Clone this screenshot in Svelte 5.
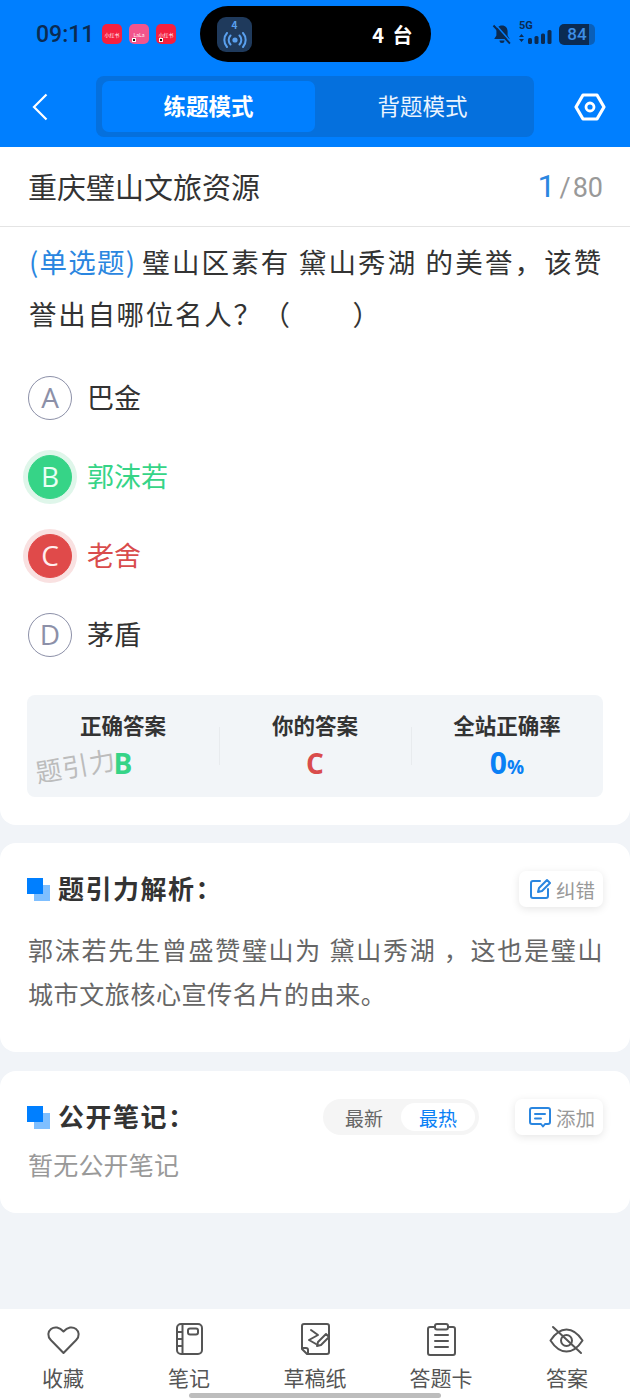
<script>
  const options = [
    { key: "A", text: "巴金", state: "" },
    { key: "B", text: "郭沫若", state: "right" },
    { key: "C", text: "老舍", state: "wrong" },
    { key: "D", text: "茅盾", state: "" }
  ];
  const apps = [
    { label: "小红书", cls: "red", dot: false },
    { label: "LaLa", cls: "pink", dot: true },
    { label: "小红书", cls: "red", dot: true }
  ];
  const tabs = ["收藏", "笔记", "草稿纸", "答题卡", "答案"];
</script>

<div class="page">
  <header class="top">
    <div class="status">
      <span class="time">09:11</span>
      <div class="apps">
        {#each apps as app}
          <span class="app {app.cls}">{app.label}{#if app.dot}<i></i>{/if}</span>
        {/each}
      </div>
      <div class="island">
        <span class="cast">
          <span class="cast-num">4</span>
          <svg width="28" height="16" viewBox="0 0 28 16" fill="none" stroke="#5aa0ee" stroke-width="2" stroke-linecap="round">
            <circle cx="14" cy="8" r="2.6" fill="#5aa0ee" stroke="none" />
            <path d="M9.5 3.5a6.5 6.5 0 0 0 0 9M18.5 3.5a6.5 6.5 0 0 1 0 9M6 1a10.5 10.5 0 0 0 0 14M22 1a10.5 10.5 0 0 1 0 14" />
          </svg>
        </span>
        <span class="island-text">4 台</span>
      </div>
      <div class="sys">
        <svg width="20" height="21" viewBox="0 0 20 21" fill="#0b2b52">
          <path d="M10 1.5c-3.6 0-5.6 2.6-5.6 6v4L2.2 15h15.4l-2-3.5v-4c0-3.4-2-6-5.6-6zM7.5 16.5a2.5 2.5 0 0 0 5 0z" />
          <path d="M1.5 1.5l16.5 18" stroke="#0b2b52" stroke-width="2" />
          <path d="M3.5 0.5l16 18" stroke="#007fff" stroke-width="1.5" />
        </svg>
        <span class="signal">
          <span class="five-g">5G</span>
          <svg width="33" height="15" viewBox="0 0 33 15" fill="#0b2b52">
            <path d="M2.5 1l2.5 3H0zM2.5 9L0 6h5z" transform="translate(0 3)" />
            <rect x="9" y="8" width="4" height="6" rx="1.5" />
            <rect x="15.5" y="6" width="4" height="8" rx="1.5" />
            <rect x="22" y="3.5" width="4" height="10.5" rx="1.5" />
            <rect x="28.5" y="0" width="4" height="14" rx="1.5" />
          </svg>
        </span>
        <span class="battery">84</span>
      </div>
    </div>
    <nav class="bar">
      <svg class="back" width="16" height="28" viewBox="0 0 16 28" fill="none" stroke="#fff" stroke-width="2.2">
        <path d="M14.5 1.5L2 14l12.5 12.5" />
      </svg>
      <div class="modes">
        <span class="mode active">练题模式</span>
        <span class="mode">背题模式</span>
      </div>
      <svg class="gear" width="32" height="28" viewBox="0 0 32 28" fill="none" stroke="#fff" stroke-width="3.2" stroke-linejoin="round">
        <path d="M9 2h14l7 12-7 12H9L2 14z" />
        <circle cx="16" cy="14" r="4" stroke-width="2.8" />
      </svg>
    </nav>
  </header>

  <section class="card main">
    <div class="title-row">
      <h1>重庆璧山文旅资源</h1>
      <div class="count"><b>1</b><span>/</span><span>80</span></div>
    </div>
    <p class="question"><span class="kind">(单选题)</span>璧山区素有 黛山秀湖 的美誉，该赞誉出自哪位名人？（　&nbsp;&nbsp;&nbsp;&nbsp;）</p>
    <div class="options">
      {#each options as o}
        <div class="option {o.state}">
          <span class="letter">{o.key}</span>
          <span class="label">{o.text}</span>
        </div>
      {/each}
    </div>
    <div class="result">
      <div class="cell">
        <span class="cell-title">正确答案</span>
        <span class="cell-value green">B</span>
      </div>
      <div class="cell">
        <span class="cell-title">你的答案</span>
        <span class="cell-value red-text">C</span>
      </div>
      <div class="cell">
        <span class="cell-title">全站正确率</span>
        <span class="cell-value blue">0<small>%</small></span>
      </div>
      <span class="watermark">题引力</span>
    </div>
  </section>

  <section class="card analysis">
    <div class="head">
      <span class="mark"></span>
      <h2>题引力解析：</h2>
      <button class="pill-btn">
        <svg width="22" height="22" viewBox="0 0 22 22" fill="none" stroke="#2a86e0" stroke-width="2" stroke-linecap="round" stroke-linejoin="round">
          <path d="M11 3H4a2 2 0 0 0-2 2v13a2 2 0 0 0 2 2h13a2 2 0 0 0 2-2v-7" />
          <path d="M9 14l1-4L18 2l3 3-8 8z" />
        </svg>
        纠错
      </button>
    </div>
    <p class="analysis-text">郭沫若先生曾盛赞璧山为 黛山秀湖 ，这也是璧山城市文旅核心宣传名片的由来。</p>
  </section>

  <section class="card notes">
    <div class="head">
      <span class="mark"></span>
      <h2>公开笔记：</h2>
      <div class="sort">
        <span>最新</span>
        <span class="on">最热</span>
      </div>
      <button class="pill-btn wide">
        <svg width="22" height="22" viewBox="0 0 22 22" fill="none" stroke="#2a86e0" stroke-width="2" stroke-linecap="round" stroke-linejoin="round">
          <path d="M3 2h16a2 2 0 0 1 2 2v12a2 2 0 0 1-2 2h-3l-2 2.5-2-2.5H3a2 2 0 0 1-2-2V4a2 2 0 0 1 2-2z" />
          <path d="M6 8h10M6 12.5h6" />
        </svg>
        添加
      </button>
    </div>
    <p class="empty">暂无公开笔记</p>
  </section>

  <div class="spacer"></div>

  <footer class="tabs">
    {#each tabs as t, i}
      <div class="tab">
        <svg width="36" height="36" viewBox="0 0 36 36" fill="none" stroke="#555" stroke-width="2" stroke-linecap="round" stroke-linejoin="round">
          {#if i === 0}
            <path d="M18.5 29L5.8 16C2.2 12.3 2.8 7.5 6 5c3.5-2.7 8.5-2 12.5 2.5C22.5 3 27.5 2.3 31 5c3.2 2.5 3.8 7.3.2 11z" />
          {:else if i === 1}
            <rect x="6" y="0" width="25" height="30" rx="4" />
            <path d="M11.5 0v30M6 8h5.5M6 15h5.5M6 22h5.5" />
            <rect x="17" y="4.5" width="10" height="6" rx="2" />
          {:else if i === 2}
            <path d="M30 0H7a2 2 0 0 0-2 2v23l5 5h20a2 2 0 0 0 2-2V2a2 2 0 0 0-2-2z" />
            <path d="M5 24h4a2 2 0 0 1 2 2v4" />
            <path d="M14 6l7 5-9 5 7 4" />
            <path d="M20 22l1-4 8-8 3 3-8 8z" fill="#fff" />
          {:else if i === 3}
            <path d="M12 3H7a2 2 0 0 0-2 2v24a2 2 0 0 0 2 2h23a2 2 0 0 0 2-2V5a2 2 0 0 0-2-2h-5" />
            <rect x="12" y="0" width="13" height="5.5" rx="2" />
            <path d="M12 11h13M12 17h13M12 23h13" />
          {:else}
            <path d="M1.5 16.5C6 9.5 11.5 5.5 17.5 5.5S29 9.5 33.5 16.5C29 23.5 23.5 27.5 17.5 27.5S6 23.5 1.5 16.5z" />
            <circle cx="17.5" cy="16.5" r="5.5" />
            <path d="M4 3l28 26" />
          {/if}
        </svg>
        <span>{t}</span>
      </div>
    {/each}
    <span class="home"></span>
  </footer>
</div>

<style>
  :global(body) {
    margin: 0;
    background: #f1f4f8;
  }
  .page {
    width: 630px;
    height: 1400px;
    display: flex;
    flex-direction: column;
    overflow: hidden;
    background: #f1f4f8;
    font-family: "Noto Sans CJK SC", "Noto Sans", sans-serif;
    color: #333;
  }
  .top {
    height: 147px;
    flex: none;
    background: #007fff;
  }
  .status {
    height: 76px;
    display: flex;
    align-items: center;
    padding: 0 35px 8px 36px;
    box-sizing: border-box;
  }
  .time {
    font-family: Roboto, sans-serif;
    font-size: 23px;
    font-weight: 500;
    color: #0b2b52;
    width: 66px;
  }
  .apps {
    display: flex;
    gap: 7px;
  }
  .app {
    position: relative;
    width: 20px;
    height: 20px;
    border-radius: 5px;
    display: flex;
    align-items: center;
    justify-content: center;
    font-size: 5px;
    color: #fff;
    overflow: hidden;
    white-space: nowrap;
  }
  .app.red {
    background: #f5203f;
  }
  .app.pink {
    background: #f2558c;
  }
  .app i {
    position: absolute;
    left: 3px;
    bottom: 2px;
    width: 4px;
    height: 4px;
    background: #111;
    border: 1px solid #fff;
    box-sizing: border-box;
  }
  .island {
    width: 231px;
    height: 56px;
    margin-left: 24px;
    border-radius: 28px;
    background: #000;
    display: flex;
    align-items: center;
    justify-content: space-between;
    padding: 0 18px 0 17px;
    box-sizing: border-box;
  }
  .cast {
    width: 35px;
    height: 35px;
    border-radius: 9px;
    background: #1f3a5c;
    display: flex;
    flex-direction: column;
    align-items: center;
    justify-content: center;
    line-height: 1;
  }
  .cast-num {
    font-size: 10px;
    color: #5aa0ee;
    height: 10px;
    font-weight: 700;
  }
  .cast svg {
    margin-top: 2px;
  }
  .island-text {
    color: #fff;
    font-size: 20px;
    font-weight: 700;
    letter-spacing: 0.5px;
    word-spacing: 3px;
  }
  .sys {
    margin-left: auto;
    display: flex;
    align-items: center;
    gap: 7px;
  }
  .signal {
    position: relative;
    width: 33px;
    height: 22px;
    display: flex;
    align-items: flex-end;
  }
  .five-g {
    position: absolute;
    left: 0;
    top: -3px;
    font-size: 11px;
    line-height: 12px;
    font-weight: 700;
    color: #0b2b52;
    font-family: Roboto, sans-serif;
  }
  .battery {
    width: 36px;
    height: 21px;
    border-radius: 5px;
    background: linear-gradient(90deg, #0b2b52 84%, #0a5fb8 84%);
    color: #3e8fe6;
    font-family: Roboto, sans-serif;
    font-size: 17px;
    font-weight: 500;
    line-height: 21px;
    text-align: center;
  }
  .bar {
    height: 61px;
    display: flex;
    align-items: center;
    padding: 0 24px 0 32px;
    position: relative;
  }
  .modes {
    width: 438px;
    height: 61px;
    margin-left: 48px;
    box-sizing: border-box;
    padding: 5px 4px 5px 6px;
    border-radius: 8px;
    background: #0570dd;
    display: flex;
  }
  .mode {
    flex: 1;
    display: flex;
    align-items: center;
    justify-content: center;
    box-sizing: border-box;
    padding-bottom: 4px;
    font-size: 22.5px;
    color: #eaf4ff;
    border-radius: 7px;
  }
  .mode.active {
    flex: none;
    width: 213px;
    background: #007fff;
    color: #fff;
    font-weight: 700;
  }
  .gear {
    margin-left: auto;
  }
  .card {
    background: #fff;
    border-radius: 16px;
    flex: none;
    box-sizing: border-box;
  }
  .main {
    height: 678px;
    border-radius: 0 0 16px 16px;
    padding: 0 27px;
    margin-bottom: 18px;
  }
  .title-row {
    height: 80px;
    box-sizing: border-box;
    margin: 0 -27px;
    padding: 0 27px 2px 28px;
    display: flex;
    align-items: center;
    justify-content: space-between;
    border-bottom: 1px solid #e4e4e4;
  }
  h1 {
    margin: 0;
    font-size: 29px;
    font-weight: 400;
    color: #333;
  }
  .count {
    display: flex;
    align-items: baseline;
    font-size: 27px;
    color: #999;
    gap: 2px;
    font-family: Roboto, sans-serif;
  }
  .count b {
    font-size: 32px;
    font-weight: 400;
    color: #2a86e0;
    margin-right: 2px;
  }
  .question {
    margin: 8px 0 0 2px;
    font-size: 27.5px;
    line-height: 52px;
    letter-spacing: 1.7px;
    color: #333;
    text-align: justify;
  }
  .kind {
    color: #2a86e0;
    letter-spacing: 0.8px;
    margin-right: 6px;
  }
  .options {
    margin-top: 37px;
    display: flex;
    flex-direction: column;
    gap: 35px;
  }
  .option {
    height: 44px;
    display: flex;
    align-items: center;
    gap: 15px;
    font-size: 27px;
  }
  .label {
    padding-bottom: 4px;
  }
  .letter {
    width: 44px;
    height: 44px;
    margin-left: 1px;
    box-sizing: border-box;
    border-radius: 50%;
    border: 1.5px solid #8c90a8;
    color: #8c90a8;
    display: flex;
    align-items: center;
    justify-content: center;
    padding-bottom: 2px;
    font-family: "Open Sans", sans-serif;
    font-size: 28px;
  }
  .option.right .letter {
    background: #36d487;
    border-color: #36d487;
    color: #eafff4;
    box-shadow: 0 0 0 5px #dff6ea;
  }
  .option.right .label {
    color: #36d487;
  }
  .option.wrong .letter {
    background: #e04a4a;
    border-color: #e04a4a;
    color: #ffeeee;
    box-shadow: 0 0 0 5px #f9e1e1;
  }
  .option.wrong .label {
    color: #d94c4c;
  }
  .result {
    position: relative;
    margin-top: 38px;
    height: 102px;
    border-radius: 8px;
    background: #f2f5f8;
    display: grid;
    grid-template-columns: repeat(3, 1fr);
    align-items: center;
  }
  .cell {
    display: flex;
    flex-direction: column;
    align-items: center;
    height: 102px;
    padding-top: 15px;
    box-sizing: border-box;
    position: relative;
  }
  .cell + .cell::before {
    content: "";
    position: absolute;
    left: 0;
    top: 32px;
    height: 38px;
    border-left: 1px solid #e8ebee;
  }
  .cell-title {
    font-size: 21.5px;
    line-height: 30px;
    font-weight: 700;
    color: #333;
  }
  .cell-value {
    margin-top: 5px;
    font-size: 28px;
    line-height: 36px;
    font-weight: 700;
    font-family: "Open Sans", sans-serif;
  }
  .cell-value.blue {
    font-size: 30px;
  }
  .cell-value small {
    font-size: 19px;
  }
  .green {
    color: #36d487;
  }
  .red-text {
    color: #d94c4c;
  }
  .blue {
    color: #0a80f5;
  }
  .watermark {
    position: absolute;
    left: 8px;
    top: 55px;
    font-size: 26px;
    line-height: 30px;
    color: #bcbcbc;
    transform: rotate(-10deg);
    letter-spacing: 1px;
  }
  .analysis {
    height: 209px;
    padding: 28px 27px 0;
    margin-bottom: 19px;
  }
  .head {
    display: flex;
    align-items: center;
    height: 36px;
  }
  .mark {
    position: relative;
    width: 23px;
    height: 23px;
    margin-right: 8px;
    flex: none;
  }
  .mark::before,
  .mark::after {
    content: "";
    position: absolute;
    width: 16px;
    height: 16px;
  }
  .mark::after {
    left: 7px;
    top: 7px;
    background: #7fbfff;
  }
  .mark::before {
    left: 0;
    top: 0;
    background: #007fff;
    z-index: 1;
  }
  h2 {
    margin: 0;
    padding-bottom: 4px;
    font-size: 26px;
    letter-spacing: 1.5px;
    font-weight: 700;
    color: #333;
    flex: 1;
    white-space: nowrap;
  }
  .pill-btn {
    flex: none;
    height: 36px;
    width: 84px;
    border: none;
    border-radius: 7px;
    background: #fff;
    box-shadow: 0 2px 8px rgba(0, 0, 0, 0.1);
    display: flex;
    align-items: center;
    justify-content: flex-end;
    gap: 5px;
    padding: 0 8px 0 0;
    font-family: inherit;
    font-size: 19.5px;
    color: #999;
  }
  .pill-btn.wide {
    width: 88px;
  }
  .analysis-text {
    margin: 20px 0 0 1px;
    font-size: 25px;
    line-height: 44px;
    letter-spacing: 0.6px;
    color: #666;
    text-align: justify;
  }
  .notes {
    height: 142px;
    padding: 28px 27px 0;
  }
  .notes h2 {
    flex: none;
    width: 265px;
  }
  .sort {
    flex: none;
    width: 156px;
    height: 36px;
    padding: 4px;
    box-sizing: border-box;
    margin-right: 36px;
    border-radius: 18px;
    background: #f5f5f5;
    display: flex;
    font-size: 19px;
    color: #666;
  }
  .sort span {
    flex: 1;
    display: flex;
    align-items: center;
    justify-content: center;
    border-radius: 14px;
  }
  .sort .on {
    background: #fff;
    color: #0a80f5;
  }
  .empty {
    margin: 11px 0 0 1px;
    font-size: 25px;
    line-height: 36px;
    color: #999;
    letter-spacing: 0.2px;
  }
  .spacer {
    flex: 1;
  }
  .tabs {
    position: relative;
    height: 91px;
    flex: none;
    background: #fff;
    display: grid;
    grid-template-columns: repeat(5, 126px);
  }
  .tab {
    display: flex;
    flex-direction: column;
    align-items: center;
    padding-top: 15px;
    font-size: 21px;
    line-height: 28px;
    color: #555;
  }
  .tab svg {
    overflow: visible;
  }
  .tab span {
    margin-top: 3px;
  }
  .home {
    position: absolute;
    left: 189px;
    bottom: 2px;
    width: 252px;
    height: 5px;
    border-radius: 3px;
    background: #bdbdbd;
  }
</style>
